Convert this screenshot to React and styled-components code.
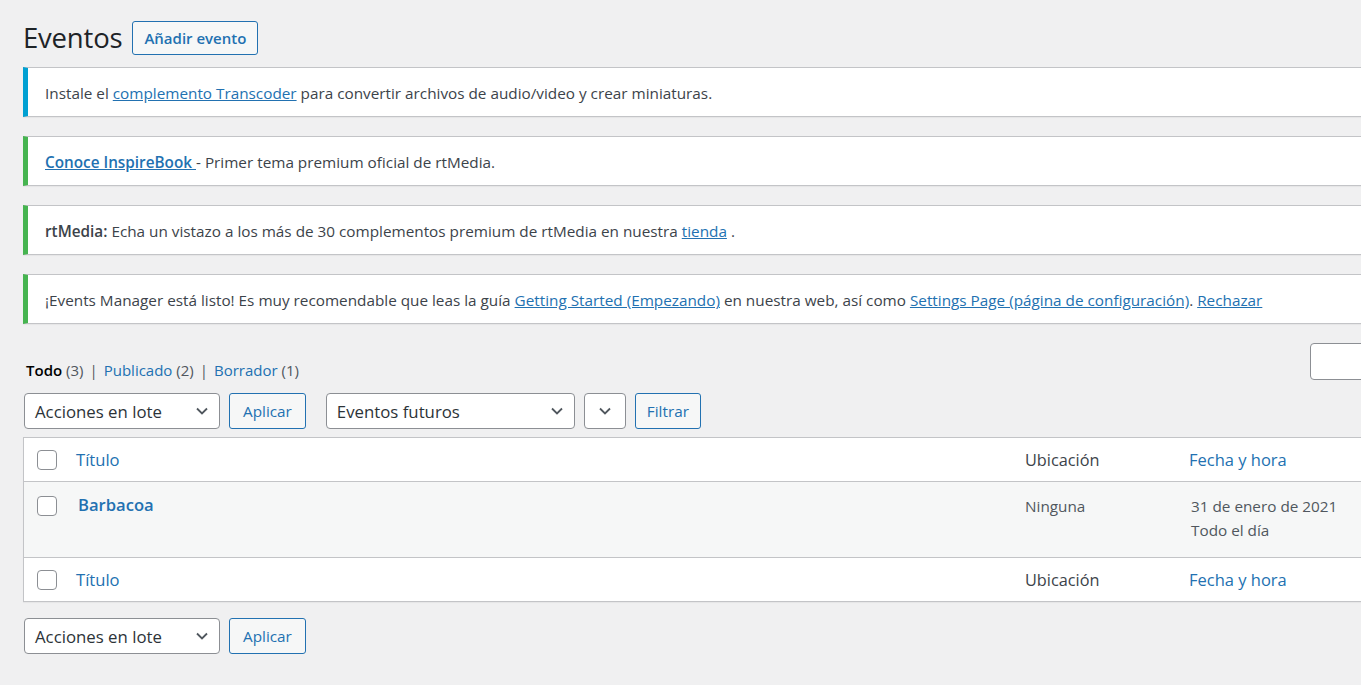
import React from "react";
import styled, { createGlobalStyle } from "styled-components";

const Global = createGlobalStyle`
  html, body { margin: 0; padding: 0; overflow: hidden; }
  body { background: #f0f0f1; font-family: "Open Sans", "Noto Sans", sans-serif; color: #3c434a; }
  a { color: #2271b1; }
`;

const Wrap = styled.div`
  width: 1500px;
  padding: 21px 0 0 23px;
  box-sizing: border-box;
`;

const Header = styled.div`
  display: flex;
  align-items: center;
  gap: 10px;
  height: 34px;
`;

const Title = styled.h1`
  margin: 0;
  font-size: 27.5px;
  font-weight: 400;
  color: #1d2327;
  letter-spacing: -0.2px;
  line-height: 34px;
`;

const OutlineButton = styled.button`
  height: ${(p) => p.$h || 36}px;
  padding: 0 ${(p) => p.$px || 11}px;
  border: 1px solid #2271b1;
  border-radius: 3px;
  background: #f6f7f7;
  color: #2271b1;
  font-family: inherit;
  font-size: ${(p) => p.$fs || 15}px;
  font-weight: ${(p) => p.$fw || 400};
  box-sizing: border-box;
  white-space: nowrap;
`;

const Notices = styled.div`
  margin-top: 12px;
  display: flex;
  flex-direction: column;
  gap: 19px;
`;

const Notice = styled.div`
  height: 50px;
  display: flex;
  align-items: center;
  background: #fff;
  border: 1px solid #c3c4c7;
  border-left: 5px solid ${(p) => (p.$kind === "info" ? "#00a0d2" : "#46b450")};
  box-shadow: 0 1px 1px rgba(0, 0, 0, 0.04);
  padding: 2px 0 0 17px;
  box-sizing: border-box;
  font-size: 15.3px;
  color: #3c434a;
  white-space: nowrap;
  a { color: #2271b1; text-decoration: underline; }
  strong { font-weight: 600; }
`;

const TopNav = styled.div`
  margin-top: 19px;
  display: flex;
  justify-content: space-between;
  align-items: flex-end;
  height: 37px;
`;

const SubSub = styled.div`
  padding-left: 3px;
  margin-bottom: -2px;
  font-size: 15px;
  color: #50575e;
  line-height: 24px;
  a { color: #2271b1; text-decoration: none; }
  strong { color: #000; font-weight: 600; }
`;

const Sep = styled.span`
  margin: 0 6px;
  color: #50575e;
`;

const SearchInput = styled.div`
  width: 180px;
  height: 37px;
  border: 1px solid #8c8f94;
  border-radius: 4px;
  background: #fff;
  box-sizing: border-box;
  margin-right: 10px;
`;

const Controls = styled.div`
  display: flex;
  align-items: center;
  margin-top: ${(p) => p.$mt}px;
  padding-left: 1px;
  height: 36px;
`;

const Group = styled.div`
  display: flex;
  gap: 9px;
  margin-right: ${(p) => p.$mr || 0}px;
`;

const Select = styled.div`
  width: ${(p) => p.$w}px;
  height: 36px;
  border: 1px solid #8c8f94;
  border-radius: 4px;
  background: #fff;
  box-sizing: border-box;
  display: flex;
  align-items: center;
  justify-content: ${(p) => (p.$center ? "center" : "space-between")};
  padding: ${(p) => (p.$center ? "0" : "0 10px")};
  font-size: 16.8px;
  color: #2c3338;
  white-space: nowrap;
`;

const Chevron = () => (
  <svg width="14" height="14" viewBox="0 0 14 14">
    <path d="M2 4.5 L7 9.5 L12 4.5" fill="none" stroke="#50575e" strokeWidth="1.8" />
  </svg>
);

const Table = styled.div`
  margin-top: 8px;
  border: 1px solid #c3c4c7;
  background: #fff;
  box-shadow: 0 1px 1px rgba(0, 0, 0, 0.04);
`;

const Row = styled.div`
  display: grid;
  grid-template-columns: 42px 949px 164px 300px;
  height: ${(p) => p.$h}px;
  background: ${(p) => (p.$alt ? "#f6f7f7" : "#fff")};
  border-top: ${(p) => (p.$top ? "1px solid #c3c4c7" : "none")};
  border-bottom: ${(p) => (p.$bottom ? "1px solid #c3c4c7" : "none")};
  box-sizing: border-box;
  align-items: ${(p) => (p.$start ? "start" : "center")};
`;

const Cell = styled.div`
  padding: ${(p) => p.$pt || 0}px 10px 0 ${(p) => p.$pl ?? 10}px;
  font-size: ${(p) => p.$fs || 16}px;
  color: ${(p) => p.$color || "#3c434a"};
  font-weight: ${(p) => p.$fw || 400};
  line-height: ${(p) => p.$lh || 24}px;
  white-space: nowrap;
`;

const CheckCell = styled.div`
  padding: ${(p) => p.$pt || 0}px 0 0 13px;
  display: flex;
`;

const Checkbox = styled.span`
  width: 20px;
  height: 20px;
  border: 1px solid #8c8f94;
  border-radius: 4px;
  background: #fff;
  box-sizing: border-box;
`;

function BulkControls() {
  return (
    <Group $mr={20}>
      <Select $w={196}>
        Acciones en lote <Chevron />
      </Select>
      <OutlineButton $px={13} $fs={15.3} $h={36}>Aplicar</OutlineButton>
    </Group>
  );
}

function HeadRow({ top, bottom }) {
  return (
    <Row $h={44} $top={top} $bottom={bottom}>
      <CheckCell><Checkbox /></CheckCell>
      <Cell $pt={1} $color="#2271b1" $fs={16.6}>Título</Cell>
      <Cell $pt={1} $fs={16.3}>Ubicación</Cell>
      <Cell $pt={1} $color="#2271b1" $fs={16.5}>Fecha y hora</Cell>
    </Row>
  );
}

export default function App() {
  return (
    <>
      <Global />
      <Wrap>
        <Header>
          <Title>Eventos</Title>
          <OutlineButton $h={34} $fs={15} $fw={600} $px={11}>Añadir evento</OutlineButton>
        </Header>
        <Notices>
          <Notice $kind="info">
            <span>Instale el <a href="#">complemento Transcoder</a> para convertir archivos de audio/video y crear miniaturas.</span>
          </Notice>
          <Notice>
            <span><a href="#"><strong>Conoce InspireBook </strong></a> - Primer tema premium oficial de rtMedia.</span>
          </Notice>
          <Notice>
            <span><strong>rtMedia:</strong> Echa un vistazo a los más de 30 complementos premium de rtMedia en nuestra <a href="#">tienda</a> .</span>
          </Notice>
          <Notice>
            <span>¡Events Manager está listo! Es muy recomendable que leas la guía <a href="#">Getting Started (Empezando)</a> en nuestra web, así como <a href="#">Settings Page (página de configuración)</a>. <a href="#">Rechazar</a></span>
          </Notice>
        </Notices>
        <TopNav>
          <SubSub>
            <strong>Todo</strong> (3)<Sep>|</Sep><a href="#">Publicado</a> (2)<Sep>|</Sep><a href="#">Borrador</a> (1)
          </SubSub>
          <SearchInput />
        </TopNav>
        <Controls $mt={13}>
          <BulkControls />
          <Group>
            <Select $w={249}>
              Eventos futuros <Chevron />
            </Select>
            <Select $w={42} $center>
              <Chevron />
            </Select>
            <OutlineButton $px={11} $fs={15.3} $h={36}>Filtrar</OutlineButton>
          </Group>
        </Controls>
        <Table>
          <HeadRow bottom />
          <Row $h={75} $alt $start>
            <CheckCell $pt={14}><Checkbox /></CheckCell>
            <Cell $pt={11} $pl={12} $color="#2271b1" $fw={600} $fs={16.6}>Barbacoa</Cell>
            <Cell $pt={12} $fs={15.3} $color="#50575e">Ninguna</Cell>
            <Cell $pt={12} $pl={12} $fs={15.3} $color="#50575e">
              31 de enero de 2021
              <br />
              Todo el día
            </Cell>
          </Row>
          <HeadRow top />
        </Table>
        <Controls $mt={16}>
          <BulkControls />
        </Controls>
      </Wrap>
    </>
  );
}
